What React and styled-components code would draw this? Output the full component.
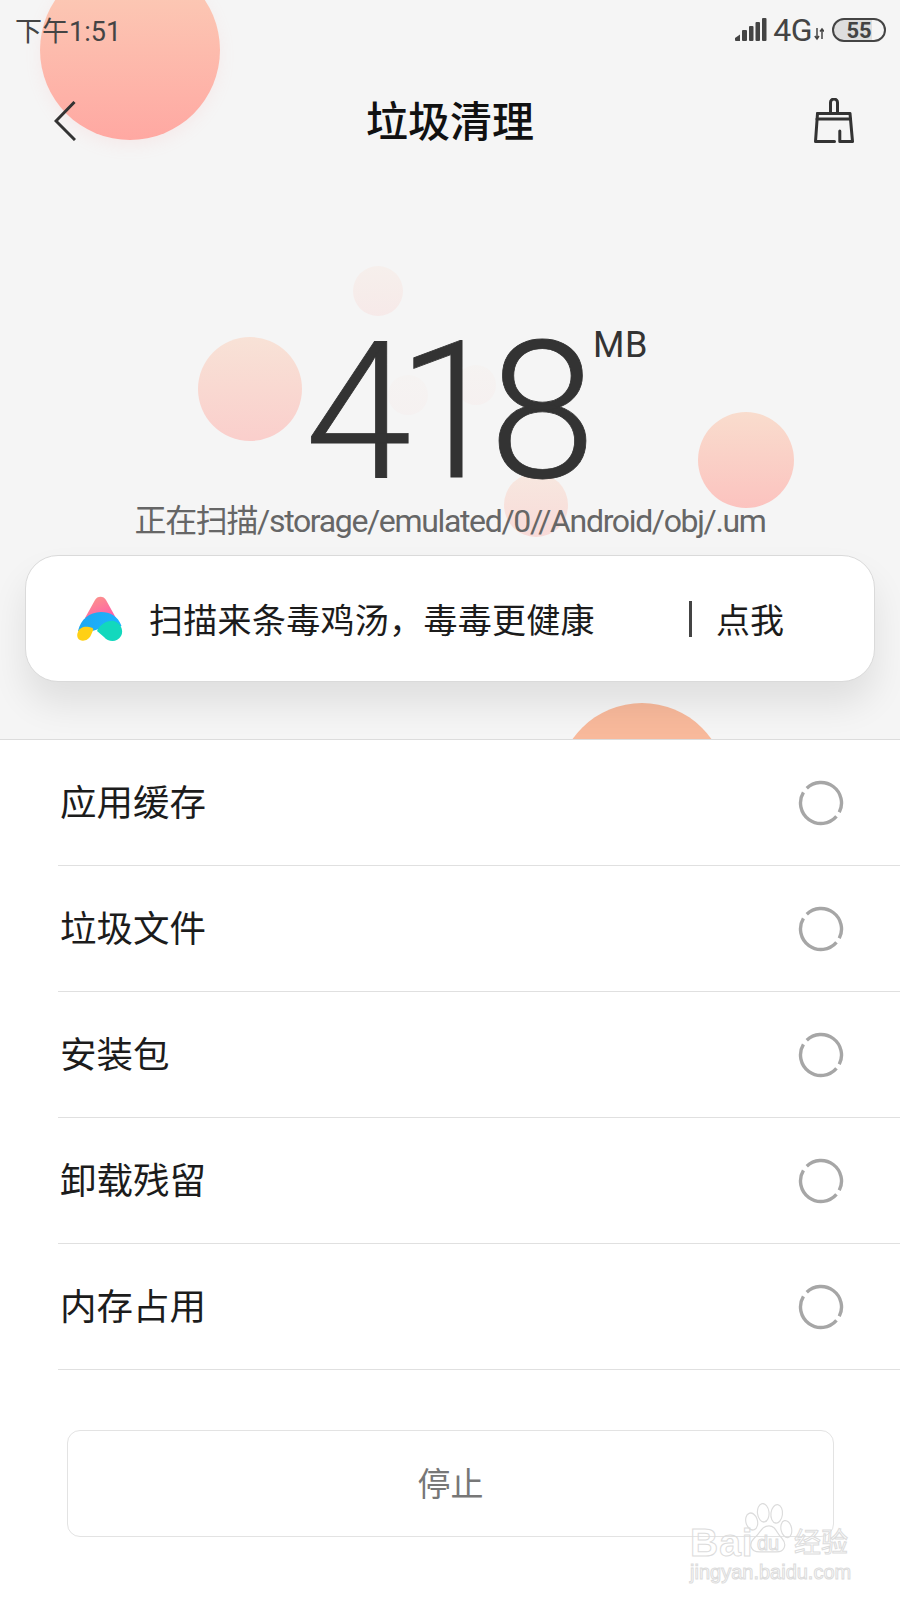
import React from 'react'
import styled, { createGlobalStyle } from 'styled-components'

const GlobalStyle = createGlobalStyle`
  html, body {
    margin: 0;
    padding: 0;
    background: #fff;
    font-family: Roboto, "Noto Sans CJK SC", sans-serif;
  }
`

const Page = styled.div`
  position: relative;
  width: 900px;
  height: 1600px;
  overflow: hidden;
  background: #fff;
`

const Hero = styled.section`
  position: relative;
  height: 740px;
  box-sizing: border-box;
  overflow: hidden;
  background: #f5f5f5;
  border-bottom: 1px solid #dcdcdc;
`

const Bubble = styled.div`
  position: absolute;
  left: ${p => p.$x - p.$r}px;
  top: ${p => p.$y - p.$r}px;
  width: ${p => p.$r * 2}px;
  height: ${p => p.$r * 2}px;
  border-radius: 50%;
  opacity: ${p => p.$opacity || 1};
  background: ${p => p.$flat ? '#f8b99b' : 'linear-gradient(180deg, #fbcfb8 0%, #ffa8a2 100%)'};
  ${p => p.$glow && 'box-shadow: 0 6px 16px rgba(255, 168, 162, 0.12);'}
`

const HeroContent = styled.div`
  position: relative;
  display: flex;
  flex-direction: column;
`

const StatusBar = styled.div`
  height: 60px;
  display: flex;
  align-items: center;
  justify-content: space-between;
  padding: 2px 14px 0 15px;
  box-sizing: border-box;
  color: #444;
`

const Clock = styled.span`
  font-size: 27px;
  line-height: 32px;
  margin-top: 2px;
  font-family: Roboto, "Noto Sans CJK SC", sans-serif;
`

const StatusRight = styled.div`
  display: flex;
  align-items: center;
  margin-top: -2px;
`

const NetworkLabel = styled.span`
  font-size: 32px;
  line-height: 32px;
  margin-left: 6px;
  letter-spacing: -0.5px;
`

const Battery = styled.div`
  position: relative;
  width: 54px;
  height: 24px;
  margin-left: 8px;
  box-sizing: border-box;
  border: 2px solid #444;
  border-radius: 12px;
  overflow: hidden;
  display: flex;
  align-items: center;
  justify-content: center;
  font-size: 22px;
  font-weight: 700;
  color: #444;
  background: linear-gradient(90deg, #dedede 0 76%, transparent 76%);
`

const NavBar = styled.header`
  height: 122px;
  display: grid;
  grid-template-columns: 1fr auto 1fr;
  align-items: center;
  padding: 0 46px 0 46px;
`

const BackSlot = styled.div`
  display: flex;
  padding-left: 8px;
`

const ActionSlot = styled.div`
  display: flex;
  justify-content: flex-end;
`

const Title = styled.h1`
  margin: 0 0 4px;
  font-size: 42px;
  line-height: 56px;
  font-weight: 500;
  color: #111;
  font-family: "Noto Sans CJK SC", sans-serif;
`

const Total = styled.div`
  display: flex;
  align-items: flex-start;
  height: 319px;
  padding: 150px 0 0 305px;
  box-sizing: border-box;
`

const Amount = styled.span`
  font-size: 192px;
  line-height: 160px;
  font-weight: 300;
  letter-spacing: -14.5px;
  color: #333;
  -webkit-text-stroke: 0.8px #333;
`

const Unit = styled.span`
  font-size: 36px;
  line-height: 38px;
  margin: -6px 0 0 12px;
  letter-spacing: 0.5px;
  color: #333;
`

const ScanPath = styled.div`
  height: 40px;
  text-align: center;
  font-size: 32px;
  line-height: 40px;
  letter-spacing: -1.35px;
  color: #666;
`

const TipCard = styled.div`
  display: flex;
  align-items: center;
  height: 127px;
  margin: 14px 25px 0 25px;
  padding: 0 0 0 51px;
  box-sizing: border-box;
  background: #fff;
  border: 1px solid #dadada;
  border-radius: 33px;
  box-shadow: 0 22px 36px rgba(0, 0, 0, 0.09);
`

const TipText = styled.span`
  flex: 1;
  margin-left: 26px;
  font-size: 34px;
  line-height: 44px;
  letter-spacing: 0.3px;
  color: #1c1c1c;
  font-family: "Noto Sans CJK SC", sans-serif;
`

const TipAction = styled.span`
  width: 185px;
  box-sizing: border-box;
  padding-left: 24px;
  border-left: 3px solid #444;
  font-size: 34px;
  line-height: 36px;
  color: #1c1c1c;
  font-family: "Noto Sans CJK SC", sans-serif;
`

const List = styled.ul`
  list-style: none;
  margin: 0;
  padding: 0 0 0 58px;
`

const Row = styled.li`
  height: 126px;
  box-sizing: border-box;
  display: flex;
  align-items: center;
  justify-content: space-between;
  padding: 0 56px 0 2px;
  border-bottom: 1px solid #e0e0e0;
`

const RowLabel = styled.span`
  margin-bottom: 4px;
  font-size: 36.5px;
  color: #1c1c1c;
  font-family: "Noto Sans CJK SC", sans-serif;
`

const StopButton = styled.button`
  display: block;
  width: 767px;
  height: 107px;
  margin: 60px 0 0 67px;
  padding: 0 0 4px;
  background: #fff;
  border: 1px solid #e3e3e3;
  border-radius: 13px;
  font-size: 33px;
  color: #777;
  font-family: "Noto Sans CJK SC", sans-serif;
`

const Watermark = styled.div`
  position: absolute;
  left: 690px;
  top: 1503px;
  width: 170px;
  height: 80px;
  color: transparent;
  -webkit-text-stroke: 1px #dcdcdc;
`

const WatermarkBrand = styled.div`
  position: absolute;
  top: 18px;
  left: 0;
  font-size: 39px;
  line-height: 44px;
  font-weight: 700;
  letter-spacing: 1px;
  font-family: "Liberation Sans", sans-serif;
`

const WatermarkDu = styled.span`
  position: absolute;
  top: 27px;
  left: 67px;
  font-size: 20px;
  line-height: 26px;
  font-family: "Liberation Sans", sans-serif;
`

const WatermarkCn = styled.span`
  position: absolute;
  top: 21px;
  left: 104px;
  font-size: 27px;
  line-height: 34px;
  font-family: "Noto Sans CJK SC", sans-serif;
`

const WatermarkUrl = styled.div`
  position: absolute;
  top: 57px;
  left: 0;
  font-size: 20px;
  line-height: 24px;
  font-family: "Liberation Sans", sans-serif;
  white-space: nowrap;
`

const PawIcon = styled.svg`
  position: absolute;
  left: 54px;
  top: 0;
`

const SignalIcon = () => (
  <svg width="32" height="24" viewBox="0 0 32 24" fill="#444">
    <path d="M0 20 L5 16.500 V23 H1 Q0 23 0 22 Z" />
    <rect x="7" y="12" width="5" height="11" rx="1" />
    <rect x="14" y="8" width="4.500" height="15" rx="1" />
    <rect x="20.500" y="4" width="4.500" height="19" rx="1" />
    <rect x="27" y="0" width="4.500" height="23" rx="1" />
  </svg>
)

const TransferIcon = () => (
  <svg width="10" height="14" viewBox="0 0 10 14" fill="none" stroke="#444" strokeWidth="1.500" style={{ marginTop: 8, marginLeft: 2 }}>
    <path d="M3 1 V12 M0.800 9 L3 12 L5 9" />
    <path d="M8 12 V2 M6 4.500 L8 2 L10 4.500" />
  </svg>
)

const BackIcon = () => (
  <svg width="22" height="40" viewBox="0 0 22 40" fill="none" stroke="#333" strokeWidth="3">
    <path d="M20.500 1 L2 20 L21 39" />
  </svg>
)

const BrushIcon = () => (
  <svg width="40" height="46" viewBox="0 0 40 46" fill="none" stroke="#333" strokeWidth="3" strokeLinejoin="round" strokeLinecap="round">
    <path d="M16.500 15.500 V4.500 a3.500 3.500 0 0 1 7 0 V15.500" />
    <path d="M3.500 15.500 H36 L38.500 43.500 H25.800 V33" />
    <path d="M20.500 43.500 H1.500 L3.500 15.500" />
    <path d="M3 21 H36.500" />
  </svg>
)

const AppLogo = () => (
  <svg width="46" height="46" viewBox="0 0 46 46" fill="none">
    <defs>
      <linearGradient id="logoPink" x1="0" y1="0" x2="0.6" y2="1">
        <stop offset="0" stopColor="#fb9a86" />
        <stop offset="1" stopColor="#ff62a8" />
      </linearGradient>
      <linearGradient id="logoBlue" x1="0" y1="0" x2="1" y2="0.2">
        <stop offset="0" stopColor="#1fa6ee" />
        <stop offset="1" stopColor="#1bb4ff" />
      </linearGradient>
    </defs>
    <path d="M18 4 C20 -0.500 27 -0.500 29 4 L39 22 L8 22 Z" fill="url(#logoPink)" />
    <path d="M1 35 C4 23 12 16.500 24 16 C33 16 41 20 44.500 30 L30 36 L22 33 L12 36 Z" fill="url(#logoBlue)" />
    <path d="M1 36 C2 32 7 30 12 31 C15 31.500 17 32 16 34.500 L14 39 C11 46 3 46 0.800 42 C0 40 0 38 1 36 Z" fill="#ffd015" />
    <path d="M20 35 C23 28 31 24 37 25 C44 27 47 35 44 40 C40 47 31 46 27 41 Z" fill="#12d8bd" />
  </svg>
)

const Spinner = () => (
  <svg width="46" height="46" viewBox="0 0 46 46" fill="none" stroke="#a6a6a6" strokeWidth="3.400">
    <path d="M8.760 8.250 A20.500 20.500 0 0 1 41.270 32.310" />
    <path d="M38.470 36.450 A20.500 20.500 0 0 1 5.430 12.440" />
  </svg>
)

const BaiduPaw = () => (
  <PawIcon width="50" height="50" viewBox="0 0 52 46" preserveAspectRatio="none" fill="none" stroke="#dcdcdc" strokeWidth="1.200">
    <ellipse cx="8" cy="17" rx="6" ry="8" transform="rotate(-20 8 17)" />
    <ellipse cx="20" cy="9" rx="6" ry="8.500" transform="rotate(-8 20 9)" />
    <ellipse cx="34" cy="10" rx="6" ry="8.500" transform="rotate(8 34 10)" />
    <ellipse cx="44" cy="24" rx="5.500" ry="8" transform="rotate(-15 44 24)" />
    <path d="M26 21 C33 21 34 28 39 32 C46 39 41 45 34 45 H16 C7 45 4 38 11 32 C17 28 18 21 26 21 Z" />
  </PawIcon>
)

const rows = ['应用缓存', '垃圾文件', '安装包', '卸载残留', '内存占用']

const App = () => {
  return (
    <Page>
      <GlobalStyle />
      <Hero>
        <Bubble $x={130} $y={50} $r={90} $glow />
        <Bubble $x={378} $y={291} $r={25} $opacity={0.15} />
        <Bubble $x={250} $y={389} $r={52} $opacity={0.5} />
        <Bubble $x={746} $y={460} $r={48} $opacity={0.65} />
        <Bubble $x={536} $y={505} $r={32} $opacity={0.35} />
        <Bubble $x={408} $y={395} $r={20} $opacity={0.05} />
        <Bubble $x={476} $y={385} $r={20} $opacity={0.06} />
        <Bubble $x={642} $y={788} $r={85} $flat />

        <HeroContent>
          <StatusBar>
            <Clock>下午1:51</Clock>
            <StatusRight>
              <SignalIcon />
              <NetworkLabel>4G</NetworkLabel>
              <TransferIcon />
              <Battery>55</Battery>
            </StatusRight>
          </StatusBar>

          <NavBar>
            <BackSlot><BackIcon /></BackSlot>
            <Title>垃圾清理</Title>
            <ActionSlot><BrushIcon /></ActionSlot>
          </NavBar>

          <Total>
            <Amount>418</Amount>
            <Unit>MB</Unit>
          </Total>

          <ScanPath>正在扫描/storage/emulated/0//Android/obj/.um</ScanPath>

          <TipCard>
            <AppLogo />
            <TipText>扫描来条毒鸡汤，毒毒更健康</TipText>
            <TipAction>点我</TipAction>
          </TipCard>
        </HeroContent>
      </Hero>

      <List>
        {rows.map(name => (
          <Row key={name}>
            <RowLabel>{name}</RowLabel>
            <Spinner />
          </Row>
        ))}
      </List>

      <StopButton>停止</StopButton>

      <Watermark>
        <BaiduPaw />
        <WatermarkBrand>Bai</WatermarkBrand>
        <WatermarkDu>du</WatermarkDu>
        <WatermarkCn>经验</WatermarkCn>
        <WatermarkUrl>jingyan.baidu.com</WatermarkUrl>
      </Watermark>
    </Page>
  )
}

export default App
